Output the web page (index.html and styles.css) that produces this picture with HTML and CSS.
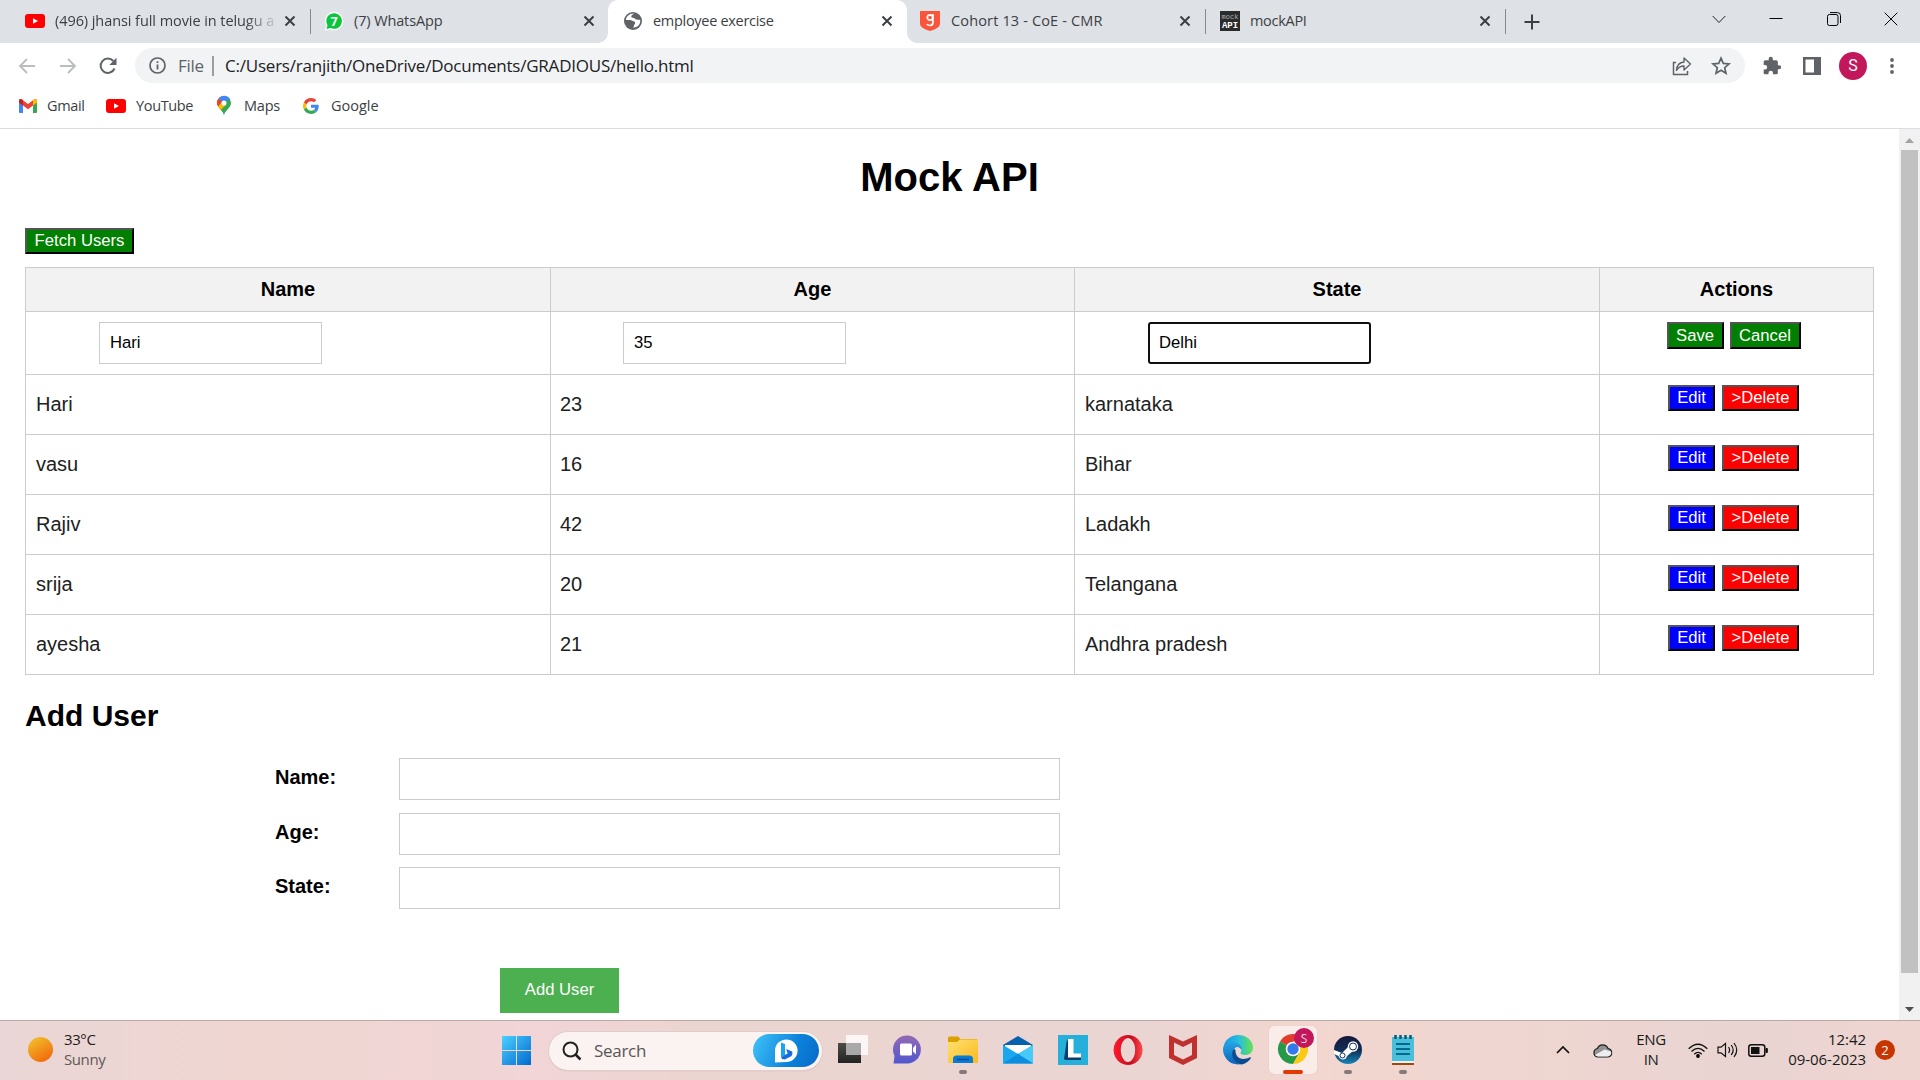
FILE: index.html
```html
<!DOCTYPE html>
<html lang="en">
<head>
<meta charset="utf-8">
<title>employee exercise</title>
<link rel="stylesheet" href="styles.css">
</head>
<body>
<svg width="0" height="0" class="defs" aria-hidden="true">
  <defs>
    <symbol id="x" viewBox="0 0 12 12"><path d="M1.5 1.5l9 9M10.5 1.5l-9 9" stroke="#3c4043" stroke-width="2" fill="none"/></symbol>
    <symbol id="yt" viewBox="0 0 20 14"><rect width="20" height="14" rx="3" fill="#f00"/><path d="M8 4.2v5.6L13 7z" fill="#fff"/></symbol>
  </defs>
</svg>

<header class="tabs">
  <div class="tab tab-first">
    <svg class="fav" width="20" height="14"><use href="#yt"/></svg>
    <span class="tab-title fade t1">(496) jhansi full movie in telugu a</span>
    <svg class="close" width="12" height="12"><use href="#x"/></svg>
  </div>
  <i class="sep"></i>
  <div class="tab tab-whatsapp">
    <svg class="fav" width="20" height="20" viewBox="0 0 20 20"><path d="M1 19.5L2.2 15A9.3 9.3 0 1 1 6 18.4z" fill="#fff"/><path d="M2.5 18l1-3.8A7.8 7.8 0 1 1 6.6 17z" fill="#0ac63c"/><text x="10" y="14.5" font-size="12.5" font-weight="700" text-anchor="middle" fill="#fff">7</text></svg>
    <span class="tab-title t2">(7) WhatsApp</span>
    <svg class="close" width="12" height="12"><use href="#x"/></svg>
  </div>
  <div class="tab active">
    <svg class="fav" width="20" height="20" viewBox="0 0 20 20"><circle cx="10" cy="10" r="9" fill="#5f6368"/><path d="M11 2.6c-1 1.3-2.3 1.4-2.7 2.6-.4 1.3 1 1.4 2.4 1.7 1.400.3 1.500 1.400 2.700 1.700 1.200.2 2.400-.2 3.800.3.500 3-1.300 6-4.100 7.100-1 .5-2.400.6-3.100.5 1.600-1.200.4-2 1.600-3.200.9-1 .7-2.600-1-3.100-1.500-.4-1.800-1.300-3.500-1.300l-4.200.1C3.300 5.600 6.300 2.400 11 2.600z" fill="#fff"/></svg>
    <span class="tab-title t3">employee exercise</span>
    <svg class="close" width="12" height="12"><use href="#x"/></svg>
  </div>
  <div class="tab">
    <svg class="fav" width="20" height="20" viewBox="0 0 20 20"><path d="M0 0h20v13q0 4-10 7Q0 17 0 13z" fill="#f9553a"/><circle cx="10" cy="6.500" r="2.700" fill="none" stroke="#fff" stroke-width="1.700"/><path d="M12.900 3v8.500q0 3-2.900 3-2.300 0-3-1.300" fill="none" stroke="#fff" stroke-width="1.700"/></svg>
    <span class="tab-title t4">Cohort 13 - CoE - CMR</span>
    <svg class="close" width="12" height="12"><use href="#x"/></svg>
  </div>
  <i class="sep"></i>
  <div class="tab tab-mock">
    <svg class="fav" width="20" height="20" viewBox="0 0 20 20"><path d="M0 0h20v20H0z" fill="#2b2b2b"/><text x="10" y="7.500" font-size="7" text-anchor="middle" fill="#a9b4bd" class="mono">mock</text><text x="10" y="17" font-size="9" font-weight="700" text-anchor="middle" fill="#fff" class="mono">API</text></svg>
    <span class="tab-title t5">mockAPI</span>
    <svg class="close" width="12" height="12"><use href="#x"/></svg>
  </div>
  <i class="sep"></i>
  <svg class="plus" width="16" height="16"><path d="M8 .5v15M.5 8h15" stroke="#3c4043" stroke-width="2"/></svg>
  <div class="window-buttons">
    <svg width="14" height="14"><path d="M.7 4l6.300 6.500L13.300 4" fill="none" stroke="#222"/></svg>
    <svg width="14" height="14"><path d="M.5 6.500h13" stroke="#000"/></svg>
    <svg width="14" height="14"><rect x=".5" y="2.500" width="10.500" height="11" rx="2" fill="none" stroke="#000"/><path d="M3 .600h7.500q3 0 3 3V11" fill="none" stroke="#000"/></svg>
    <svg width="14" height="14"><path d="M.7.700l12.600 12.600M13.300.700L.7 13.300" stroke="#000"/></svg>
  </div>
</header>

<nav class="toolbar">
  <svg class="back" width="18" height="18" viewBox="0 0 18 18"><path d="M17 9H2M9 2L2 9l7 7" fill="none" stroke="#babcbe" stroke-width="1.800"/></svg>
  <svg class="forward" width="18" height="18" viewBox="0 0 18 18"><path d="M1 9h15M9 2l7 7-7 7" fill="none" stroke="#babcbe" stroke-width="1.800"/></svg>
  <svg class="reload" width="18" height="18" viewBox="0 0 18 18"><path d="M15.500 11.500A7.200 7.200 0 1 1 14.300 4" fill="none" stroke="#5f6368" stroke-width="2"/><path d="M17.500.800v7.200h-7.200z" fill="#5f6368"/></svg>
  <div class="omnibox">
    <svg width="17" height="17" viewBox="0 0 17 17"><circle cx="8.500" cy="8.500" r="7.500" fill="none" stroke="#5f6368" stroke-width="1.700"/><path d="M8.500 7.500v5M8.500 4.200v1.900" stroke="#5f6368" stroke-width="1.800"/></svg>
    <span class="scheme">File</span><i></i><span class="url">C:/Users/ranjith/OneDrive/Documents/GRADIOUS/hello.html</span>
    <svg class="share" width="20" height="20" viewBox="0 0 20 20"><path d="M4 6.500H1.500v12h14V15" fill="none" stroke="#5f6368" stroke-width="1.500"/><path d="M4.500 14.500Q5 6.500 12 6V2l6.500 6-6.500 6v-4q-5 0-7.500 4.500z" fill="none" stroke="#5f6368" stroke-width="1.400" stroke-linejoin="round"/></svg>
    <svg class="star" width="20" height="20" viewBox="0 0 20 20"><path d="M10 2.200l2.300 5.200 5.700.5-4.300 3.800 1.300 5.600-5-3-5 3 1.300-5.600L2 7.900l5.700-.5z" fill="none" stroke="#5f6368" stroke-width="1.700"/></svg>
  </div>
  <svg class="puzzle" width="20" height="20" viewBox="0 0 24 24"><path fill="#5f6368" d="M20.500 11H19V7c0-1.100-.9-2-2-2h-4V3.500a2.500 2.500 0 0 0-5 0V5H4c-1.100 0-2 .9-2 2v3.800h1.500a2.700 2.700 0 0 1 0 5.400H2V20c0 1.100.9 2 2 2h3.800v-1.500a2.700 2.700 0 0 1 5.400 0V22H17c1.100 0 2-.9 2-2v-4h1.500a2.500 2.500 0 0 0 0-5z"/></svg>
  <svg class="panel" width="18" height="18"><path d="M0 0h18v18H0zM2.500 2.500v13h8.500v-13z" fill="#5f6368" fill-rule="evenodd"/></svg>
  <span class="avatar">S</span>
  <svg class="dots" width="4" height="16"><g fill="#5f6368"><circle cx="2" cy="2" r="1.900"/><circle cx="2" cy="8" r="1.900"/><circle cx="2" cy="14" r="1.900"/></g></svg>
</nav>

<nav class="bookmarks">
  <svg width="18" height="14" viewBox="0 0 18 14"><path d="M0 2v11q0 1 1 1h3V5z" fill="#4285f4"/><path d="M18 2v11q0 1-1 1h-3V5z" fill="#34a853"/><path d="M0 2q0-3 3-1.500L9 5l6-4.500Q18-1 18 2v1.500L9 10.300 0 3.500z" fill="#ea4335"/><path d="M14 1.300l1-.8Q18-1 18 2v1.500l-4 3z" fill="#fbbc04"/><path d="M4 1.300L3 .5Q0-1 0 2v1.500l4 3z" fill="#c5221f"/></svg>
  <span class="b1">Gmail</span>
  <svg class="m2" width="20" height="14"><use href="#yt"/></svg>
  <span class="b2">YouTube</span>
  <svg class="m3" width="14" height="20" viewBox="0 0 14 20"><path d="M7 20c0-5 7-8 7-13A7 7 0 0 0 7 0 7 7 0 0 0 0 7c0 5 7 8 7 13z" fill="#34a853"/><path d="M1 10.500A7 7 0 0 1 1.500 2.500L7 7z" fill="#ea4335"/><path d="M1.500 2.500A7 7 0 0 1 13 3.200L7 7z" fill="#4285f4"/><path d="M1 10.500L5 6l4 3-5.500 5z" fill="#fbbc04"/><circle cx="7" cy="7" r="2.500" fill="#fff"/></svg>
  <span class="b3">Maps</span>
  <svg class="m4" width="16" height="16" viewBox="0 0 48 48"><path fill="#EA4335" d="M24 9.500c3.540 0 6.710 1.220 9.210 3.600l6.850-6.850C35.900 2.380 30.470 0 24 0 14.620 0 6.510 5.380 2.560 13.220l7.980 6.190C12.430 13.720 17.740 9.500 24 9.500z"/><path fill="#4285F4" d="M46.980 24.550c0-1.570-.15-3.090-.38-4.550H24v9.020h12.940c-.58 2.960-2.260 5.480-4.780 7.180l7.730 6c4.510-4.180 7.090-10.360 7.090-17.650z"/><path fill="#FBBC05" d="M10.530 28.590A14.500 14.500 0 0 1 9.770 24c0-1.600.27-3.140.76-4.590l-7.980-6.190A23.900 23.900 0 0 0 0 24c0 3.880.92 7.540 2.560 10.780z"/><path fill="#34A853" d="M24 48c6.480 0 11.930-2.130 15.890-5.810l-7.730-6A14.600 14.600 0 0 1 24 38.490c-6.260 0-11.570-4.220-13.470-9.910l-7.980 6.190C6.510 42.620 14.620 48 24 48z"/></svg>
  <span class="b4">Google</span>
</nav>

<div class="viewport">
  <main class="page">
    <h1>Mock API</h1>
    <button class="btn green fetch">Fetch Users</button>
    <table>
      <colgroup><col class="c1"><col class="c2"><col class="c3"><col class="c4"></colgroup>
      <tr class="head"><th>Name</th><th>Age</th><th>State</th><th>Actions</th></tr>
      <tr class="edit"><td><div class="field">Hari</div></td><td><div class="field">35</div></td><td><div class="field focus">Delhi</div></td><td class="actions"><div class="pair save"><button class="btn green">Save</button><button class="btn green">Cancel</button></div></td></tr>
      <tr><td>Hari</td><td>23</td><td>karnataka</td><td class="actions"><div class="pair"><button class="btn blue">Edit</button><button class="btn red">&gt;Delete</button></div></td></tr>
      <tr><td>vasu</td><td>16</td><td>Bihar</td><td class="actions"><div class="pair"><button class="btn blue">Edit</button><button class="btn red">&gt;Delete</button></div></td></tr>
      <tr><td>Rajiv</td><td>42</td><td>Ladakh</td><td class="actions"><div class="pair"><button class="btn blue">Edit</button><button class="btn red">&gt;Delete</button></div></td></tr>
      <tr><td>srija</td><td>20</td><td>Telangana</td><td class="actions"><div class="pair"><button class="btn blue">Edit</button><button class="btn red">&gt;Delete</button></div></td></tr>
      <tr><td>ayesha</td><td>21</td><td>Andhra pradesh</td><td class="actions"><div class="pair"><button class="btn blue">Edit</button><button class="btn red">&gt;Delete</button></div></td></tr>
    </table>
    <h2>Add User</h2>
    <div class="form">
      <div class="form-row"><b>Name:</b><div class="input"></div></div>
      <div class="form-row"><b>Age:</b><div class="input"></div></div>
      <div class="form-row last"><b>State:</b><div class="input"></div></div>
      <button class="add">Add User</button>
    </div>
  </main>
  <div class="scrollbar">
    <svg width="9" height="5"><path d="M4.500 0L9 5H0z" fill="#a3a3a3"/></svg>
    <div class="thumb"></div>
    <svg class="down" width="9" height="5"><path d="M4.500 5L9 0H0z" fill="#505050"/></svg>
  </div>
</div>

<footer class="taskbar">
  <div class="sun"></div>
  <div class="weather"><span>33°C</span><span class="dim">Sunny</span></div>
  <svg class="start" width="29" height="29"><defs><linearGradient id="w" gradientUnits="userSpaceOnUse" x1="0" y1="0" x2="29" y2="29"><stop stop-color="#4cd0fe"/><stop offset="1" stop-color="#0069cf"/></linearGradient></defs><path d="M0 0h14v14H0zM15 0h14v14H15zM0 15h14v14H0zM15 15h14v14H15z" fill="url(#w)"/></svg>
  <div class="search">
    <svg width="20" height="20" viewBox="0 0 20 20"><circle cx="8.500" cy="8.500" r="7" fill="none" stroke="#222" stroke-width="2"/><path d="M13.500 13.500l5 5" stroke="#222" stroke-width="2.500"/></svg>
    <span>Search</span>
    <div class="bing"><svg width="24" height="24" viewBox="0 0 24 24"><path d="M1 23.500V12A11.300 11.300 0 1 1 12 23z" fill="#fff"/><path d="M7 3.500l4 1.400v11l-4 2.300z" fill="#18a5f0"/><path d="M7 18.200l3.700-2.200 3-1.500-1.500-4.500 6 2.500q1 4-2.500 5.600l-5 2.400q-3 0-3.700-2.300z" fill="#176ce0"/></svg></div>
  </div>
  <div class="apps">
    <div class="app"><svg width="30" height="30"><defs><linearGradient id="tv" x2="0" y2="1"><stop stop-color="#4c4c4a"/><stop offset="1" stop-color="#222"/></linearGradient></defs><rect y="8" width="23" height="20" fill="url(#tv)"/><rect x="8" y="0" width="22" height="20" fill="#fff" opacity=".78"/><path d="M8 8h15v12H8z" fill="#999" opacity=".75"/></svg></div>
    <div class="app"><svg width="30" height="30" viewBox="0 0 30 30"><defs><linearGradient id="ch" x2="0" y2="1"><stop stop-color="#9568b5"/><stop offset="1" stop-color="#5058d0"/></linearGradient></defs><path d="M.5 28.500L1.500 21A14 14 0 1 1 15 28.500z" fill="url(#ch)"/><rect x="7" y="8.500" width="12" height="12" rx="1.500" fill="#fff"/><path d="M20 13l3-3.500v10L20 16.500z" fill="#fff"/></svg></div>
    <div class="app running"><svg width="30" height="30" viewBox="0 0 30 30"><defs><linearGradient id="fo" x2="1" y2="1"><stop stop-color="#ffe173"/><stop offset="1" stop-color="#fbb91c"/></linearGradient></defs><path d="M0 3q0-1.500 1.500-1.500H10L12.500 4H29v6H0z" fill="#dda000"/><path d="M0 7h9l3-2.500h18V28H0z" fill="url(#fo)"/><path d="M5 28v-4q0-3.500 3.500-3.500h13q3.500 0 3.500 3.500v4z" fill="#087bd2"/><path d="M9 24.500h12" stroke="#064b93" stroke-width="1.500"/></svg></div>
    <div class="app"><svg width="30" height="30" viewBox="0 0 30 30"><path d="M0 10L15 1l15 9v5H0z" fill="#0760ae"/><path d="M2 10h26v8H2z" fill="#fff"/><path d="M0 10l15 9 15-9v18.500H0z" fill="#19a7ee"/><path d="M30 10v18.500L15 19z" fill="#45caf9"/><path d="M0 28.500L15 19l15 9.500z" fill="#0d8ddd"/></svg></div>
    <div class="app"><svg width="30" height="30"><path d="M0 0h30v30H0z" fill="#25afdb"/><path d="M9 4L6 24l7 1 1-5z" fill="#093d6b"/><path d="M6 25h17v-4H12z" fill="#093d6b"/><path d="M10 4h5.500v14.500H23v4H10z" fill="#fff"/></svg></div>
    <div class="app"><svg width="30" height="30" viewBox="0 0 30 30"><defs><linearGradient id="op" x2="1"><stop stop-color="#ff1b2d"/><stop offset=".6" stop-color="#c60a20"/><stop offset="1" stop-color="#ff4b4b"/></linearGradient></defs><path fill-rule="evenodd" d="M15 0a14.500 15 0 1 0 .1 0zM15 3a7.200 12 0 1 1-.1 0z" fill="url(#op)"/></svg></div>
    <div class="app"><svg width="28" height="30" viewBox="0 0 28 30"><path fill-rule="evenodd" d="M0 0l14 6.500L28 0v23l-14 7-14-7zM5 7.500v12.500l9 4.500 9-4.500V7.500L14 12z" fill="#c0302e"/></svg></div>
    <div class="app"><svg width="30" height="30" viewBox="0 0 30 30"><defs><linearGradient id="e1" x2="1"><stop stop-color="#1795df"/><stop offset=".5" stop-color="#28bde0"/><stop offset="1" stop-color="#62e34c"/></linearGradient><linearGradient id="e2" x2="0" y2="1"><stop stop-color="#26a5e5"/><stop offset="1" stop-color="#0b62bd"/></linearGradient></defs><path d="M.5 13C1 5.500 7.500 0 15 0c9 0 15 6 15 12.500 0 5-4 7.500-8 7.500-3 0-5-1-4.500-2.500 2-2.500 1-6-3.500-7z" fill="url(#e1)"/><path d="M0 15C0 9.500 4.500 7 9 7c6 0 10.500 4 9.500 8-1-2-3-3.500-5-3-6 3.500-4 16 5 17A15 15 0 0 1 0 15z" fill="url(#e2)"/><path d="M10 15c-3 7 2.500 14 9 14.500 4-1 7-3.500 9-6.500q0-1-1-.7C18 26.500 12 22 12.500 15q-1.500-1.500-2.500 0z" fill="#0b4c91"/></svg></div>
    <div class="app current"><svg width="36" height="38" viewBox="0 0 36 38"><g transform="translate(0 6)"><path d="M15 15L2 7.500A15 15 0 0 1 28 7.500H15z" fill="#e33b2e"/><path d="M2 7.500A15 15 0 0 0 15 30l6.500-11.200L15 15z" fill="#279847"/><path d="M28 7.500A15 15 0 0 1 15 30l6.500-11.200L15 7.500z" fill="#fdc914"/><circle cx="15" cy="15" r="7.300" fill="#fff"/><circle cx="15" cy="15" r="5.700" fill="#3479ea"/></g><circle cx="26" cy="10" r="10" fill="#c2185b"/><text x="26" y="14.500" font-size="12" text-anchor="middle" fill="#f7d0df">S</text></svg></div>
    <div class="app running"><svg width="28" height="28" viewBox="0 0 28 28"><defs><linearGradient id="st" x2="0" y2="1"><stop stop-color="#16173c"/><stop offset=".5" stop-color="#102d54"/><stop offset="1" stop-color="#1586ba"/></linearGradient></defs><circle cx="14" cy="14" r="14" fill="url(#st)"/><path d="M0 14l8 3 6-6 5 4-6 5q-1 4-5 3.500-3-1-3.500-3.500L0 18z" fill="#fff"/><circle cx="19" cy="10.500" r="5.200" fill="#fff"/><circle cx="19" cy="10.500" r="3.500" fill="none" stroke="#17305a" stroke-width="1"/><circle cx="8.500" cy="19.500" r="2.500" fill="none" stroke="#17305a"/></svg></div>
    <div class="app running"><svg width="22" height="30" viewBox="0 0 22 30"><path d="M0 25h22v5H0z" fill="#9b4a0b"/><path d="M0 24h22v4H0z" fill="#eee"/><path d="M0 2h22v24H0z" fill="#48bfdb"/><path d="M4 9h14M4 14h14M4 19h14" stroke="#07698a" stroke-width="2"/><path d="M3.500 0v4M8.500 0v4M13.500 0v4M18.500 0v4" stroke="#075b7b" stroke-width="2.500"/></svg></div>
  </div>
  <div class="tray">
    <svg class="up" width="14" height="8"><path d="M1 7l6-6 6 6" fill="none" stroke="#111" stroke-width="1.700"/></svg>
    <svg class="cloud" width="20" height="15" viewBox="0 0 20 15"><path d="M5 14a4.300 4.300 0 0 1-.6-8.500A5.700 5.700 0 0 1 15 5.500a4.300 4.300 0 0 1 0 8.500z" fill="#929292" stroke="#191919" stroke-width="1.200"/><path d="M2 12l9.500-5.500L18 8.500q1.500 3-3 4.900H5q-2 0-3-1.400z" fill="#eee"/></svg>
    <div class="lang"><span>ENG</span><span>IN</span></div>
    <svg class="wifi" width="20" height="15" viewBox="0 0 20 15"><g fill="none" stroke="#111" stroke-width="1.300"><path d="M.7 5.700q9.300-9 18.600 0M3.500 8.500q6.500-6.200 13 0M6.200 11.200q3.800-3.600 7.600 0"/></g><circle cx="10" cy="13" r="1.900"/></svg>
    <svg class="speaker" width="21" height="16" viewBox="0 0 21 16"><g fill="none" stroke="#111" stroke-width="1.200"><path d="M1 5.200h3L8.500 1.500v13L4 10.800H1zM11.500 5q2.200 3 0 6M14.200 3q4 5 0 10M17 1q5.500 7 0 14"/></g></svg>
    <svg class="battery" width="20" height="13"><rect x=".8" y=".8" width="16" height="11.400" rx="2.500" fill="none" stroke="#111" stroke-width="1.500"/><rect x="3" y="3" width="8.500" height="7" fill="#111"/><path d="M18 4.500h1.300v4H18z" stroke="#111"/></svg>
    <div class="clock"><span>12:42</span><span>09-06-2023</span></div>
    <span class="badge">2</span>
  </div>
</footer>
</body>
</html>
```
FILE: styles.css
```css
* { box-sizing: border-box; }
body { margin: 0; width: 1920px; height: 1080px; overflow: hidden; display: flex; flex-direction: column; background: #fff; font-family: "Open Sans", "Noto Sans", sans-serif; color: #3c4043; }
svg { display: block; flex: none; overflow: visible; }
.defs { display: none; }
.mono { font-family: "Liberation Mono", monospace; }

/* Tab strip */
.tabs { height: 43px; flex: none; display: flex; align-items: center; background: #dee1e6; }
.tab { width: 298px; height: 43px; flex: none; display: flex; align-items: center; padding: 0 14px 2px 13px; }
.tab-first { width: 310px; padding-left: 25px; }
.tab-whatsapp { width: 297px; padding-right: 13px; }
.tab-mock { width: 299px; padding-left: 14px; }
.active { position: relative; width: 299px; background: #fff; border-radius: 10px 10px 0 0; padding-left: 15px; }
.active::before, .active::after { content: ""; position: absolute; bottom: 0; width: 10px; height: 10px; }
.active::before { right: 100%; background: radial-gradient(circle at 0 0, transparent 9.500px, #fff 10px); }
.active::after { left: 100%; background: radial-gradient(circle at 100% 0, transparent 9.500px, #fff 10px); }
.tab-title { margin-left: 10px; font-size: 14.500px; white-space: nowrap; flex: 1; overflow: hidden; letter-spacing: -.3px; }
.t1 { letter-spacing: -.07px; }
.t2 { letter-spacing: -.12px; }
.t4 { margin-left: 11px; letter-spacing: .15px; }
.fade { flex: none; width: 220px; margin-right: 9px; -webkit-mask-image: linear-gradient(90deg, #000 190px, transparent 225px); }
.sep { width: 1px; height: 25px; flex: none; background: #868a90; }
.plus { margin-left: 18px; }
.window-buttons { display: flex; gap: 43.500px; margin-left: auto; margin-right: 22px; padding-bottom: 6px; }

/* Address row */
.toolbar { height: 45px; flex: none; display: flex; align-items: center; padding-left: 18px; }
.forward { margin-left: 23px; }
.reload { margin-left: 22px; }
.omnibox { width: 1610px; height: 35px; margin-left: 18px; border-radius: 18px; background: #f1f3f4; display: flex; align-items: center; padding: 0 14px 0 14px; font-size: 17px; white-space: nowrap; }
.omnibox i { width: 2px; height: 20px; margin-left: 9px; background: #9a9da1; }
.scheme { width: 25px; margin-left: 12px; color: #5f6368; letter-spacing: -.3px; }
.url { margin-left: 11px; color: #202124; letter-spacing: -.22px; }
.share { margin-left: auto; }
.star { margin-left: 19px; }
.puzzle { margin-left: 17px; }
.panel { margin-left: 21px; }
.avatar { width: 28px; height: 28px; margin-left: 18px; border-radius: 50%; background: #c2185b; color: #fff; font: 16px/28px Roboto, sans-serif; text-align: center; }
.dots { margin-left: 23px; }

/* Bookmarks */
.bookmarks { height: 41px; flex: none; display: flex; align-items: center; padding: 0 0 5px 19px; border-bottom: 1px solid #dadce0; font-size: 14.500px; letter-spacing: -.35px; white-space: nowrap; }
.bookmarks span { margin-left: 10px; }
.b1 { width: 59px; }
.b2 { width: 81px; }
.bookmarks .b3 { width: 59px; margin-left: 13px; letter-spacing: -.2px; }
.bookmarks .b4 { margin-left: 12px; letter-spacing: 0; }

/* Document */
.viewport { height: 891px; flex: none; display: flex; font-family: "Liberation Sans", Arial, sans-serif; color: #000; }
.page { width: 1899px; padding: 24px 25px 0; overflow: hidden; }
h1 { margin: 0; font-size: 40px; line-height: 48px; text-align: center; }
.btn { height: 26px; margin: 0; padding: 0 7px; border: 2px outset #000; color: #fff; font: 16.670px/20px "Liberation Sans", Arial, sans-serif; white-space: nowrap; }
.green { background: #008000; }
.blue { background: #00f; }
.red { background: #f00; }
.fetch { display: block; width: 109px; margin-top: 27px; padding: 0; }
table { width: 1848px; margin-top: 13px; table-layout: fixed; border-collapse: collapse; font-size: 20px; line-height: 23px; }
.c1 { width: 525px; }
.c2 { width: 524px; }
.c3 { width: 525px; }
.c4 { width: 274px; }
tr { height: 60px; }
.head { height: 44px; background: #f2f2f2; }
.edit { height: 63px; }
th, td { padding: 0 10px; border: 1px solid #ccc; }
td { color: #212121; }
td:nth-child(2) { padding-left: 9px; }
.field { width: 223px; height: 42px; margin-left: 63px; padding-left: 10px; border: 1px solid #ccc; font-size: 16.670px; line-height: 39px; color: #000; }
.focus { border: 2px solid #101010; border-radius: 3px; padding-left: 9px; line-height: 37px; }
.actions { vertical-align: top; }
.pair { display: flex; justify-content: center; gap: 7px; padding: 10px 6px 0 0; }
.pair .btn { width: 77px; padding: 0; }
.pair .blue { width: 47px; }
.pair.save { gap: 6px; }
.save .btn { width: 71px; height: 27px; }
.save .btn:first-child { width: 57px; }
h2 { margin: 23px 0 0; font-size: 30px; line-height: 36px; }
.form { padding: 24px 0 0 250px; }
.form-row { display: flex; height: 42px; margin-bottom: 13px; font-size: 20px; line-height: 38px; }
.form-row:nth-child(2) { margin-bottom: 12px; }
.form-row b { width: 124px; }
.input { width: 661px; border: 1px solid #ccc; }
.form .last { margin-bottom: 59px; }
.add { display: block; width: 119px; height: 45px; margin-left: 225px; padding: 0 0 2px; border: 0; background: #4caf50; color: #fff; font: 16.670px "Liberation Sans", Arial, sans-serif; }
.scrollbar { width: 21px; display: flex; flex-direction: column; align-items: center; padding: 9px 0 8px; background: #f1f1f1; }
.thumb { width: 17px; height: 823px; margin-top: 7px; background: #c1c1c1; }
.scrollbar .down { margin-top: auto; }

/* Taskbar */
.taskbar { height: 60px; flex: none; display: flex; align-items: center; border-top: 1px solid #b9aaa9; background: linear-gradient(90deg, #ead6d6 0, #efd6d1 260px, #f1d5d7 540px, #ebd5d0 700px, #ebd5d3 1150px, #f2d6cf 1300px, #efd6d0 1500px, #e9d4d2 1750px, #efd5d0 1920px); color: #1b1b1b; font-size: 15px; line-height: 20px; }
.taskbar span { display: block; }
.sun { width: 25px; height: 25px; margin: 0 0 3px 28px; border-radius: 50%; background: linear-gradient(150deg, #f0b82b 15%, #f2670a 90%); }
.weather { width: 60px; margin: 0 0 3px 11px; letter-spacing: -.4px; }
.dim { color: #5e5756; }
.start { margin-left: 378px; }
.search { width: 273px; height: 38px; margin-left: 18px; border-radius: 19px; background: #faf3f1; box-shadow: 0 0 0 1px #e1cdcb, 0 1px 1px #a99c9b; display: flex; align-items: center; padding: 0 3px 0 13px; font-size: 17px; color: #5b5655; }
.search span { margin-left: 12px; letter-spacing: -.3px; }
.bing { width: 66px; height: 33px; margin-left: auto; border-radius: 17px; background: linear-gradient(115deg, #42c4f9, #0b82da 60%, #0869c9); display: flex; align-items: center; justify-content: center; }
.apps { display: flex; margin: 0 0 1px 3px; }
.app { position: relative; width: 55px; height: 48px; display: flex; align-items: center; justify-content: center; }
.running::after, .current::after { content: ""; position: absolute; bottom: 0; left: 24px; width: 8px; height: 4px; border-radius: 2px; background: #85797a; }
.current { width: 48px; margin: 0 3.500px; border-radius: 5px; background: #f9ece9; box-shadow: 0 0 1px #c8b5b2; }
.current svg { margin: 0 0 6px 6px; }
.current::after { left: 14px; width: 20px; background: #de3a02; }
.tray { display: flex; align-items: center; margin-left: auto; padding: 0 25px 1px 0; }
.cloud { margin-left: 23px; }
.lang { width: 40px; margin: 0 0 2px 18px; text-align: center; letter-spacing: -.4px; }
.wifi { margin-left: 17px; }
.speaker { margin-left: 9px; }
.battery { margin-left: 10px; }
.clock { width: 98px; margin-bottom: 3px; text-align: right; letter-spacing: -.05px; }
.badge { width: 20px; height: 20px; margin-left: 9px; border-radius: 50%; background: #c83600; color: #fff; font-size: 13px; text-align: center; }
```
